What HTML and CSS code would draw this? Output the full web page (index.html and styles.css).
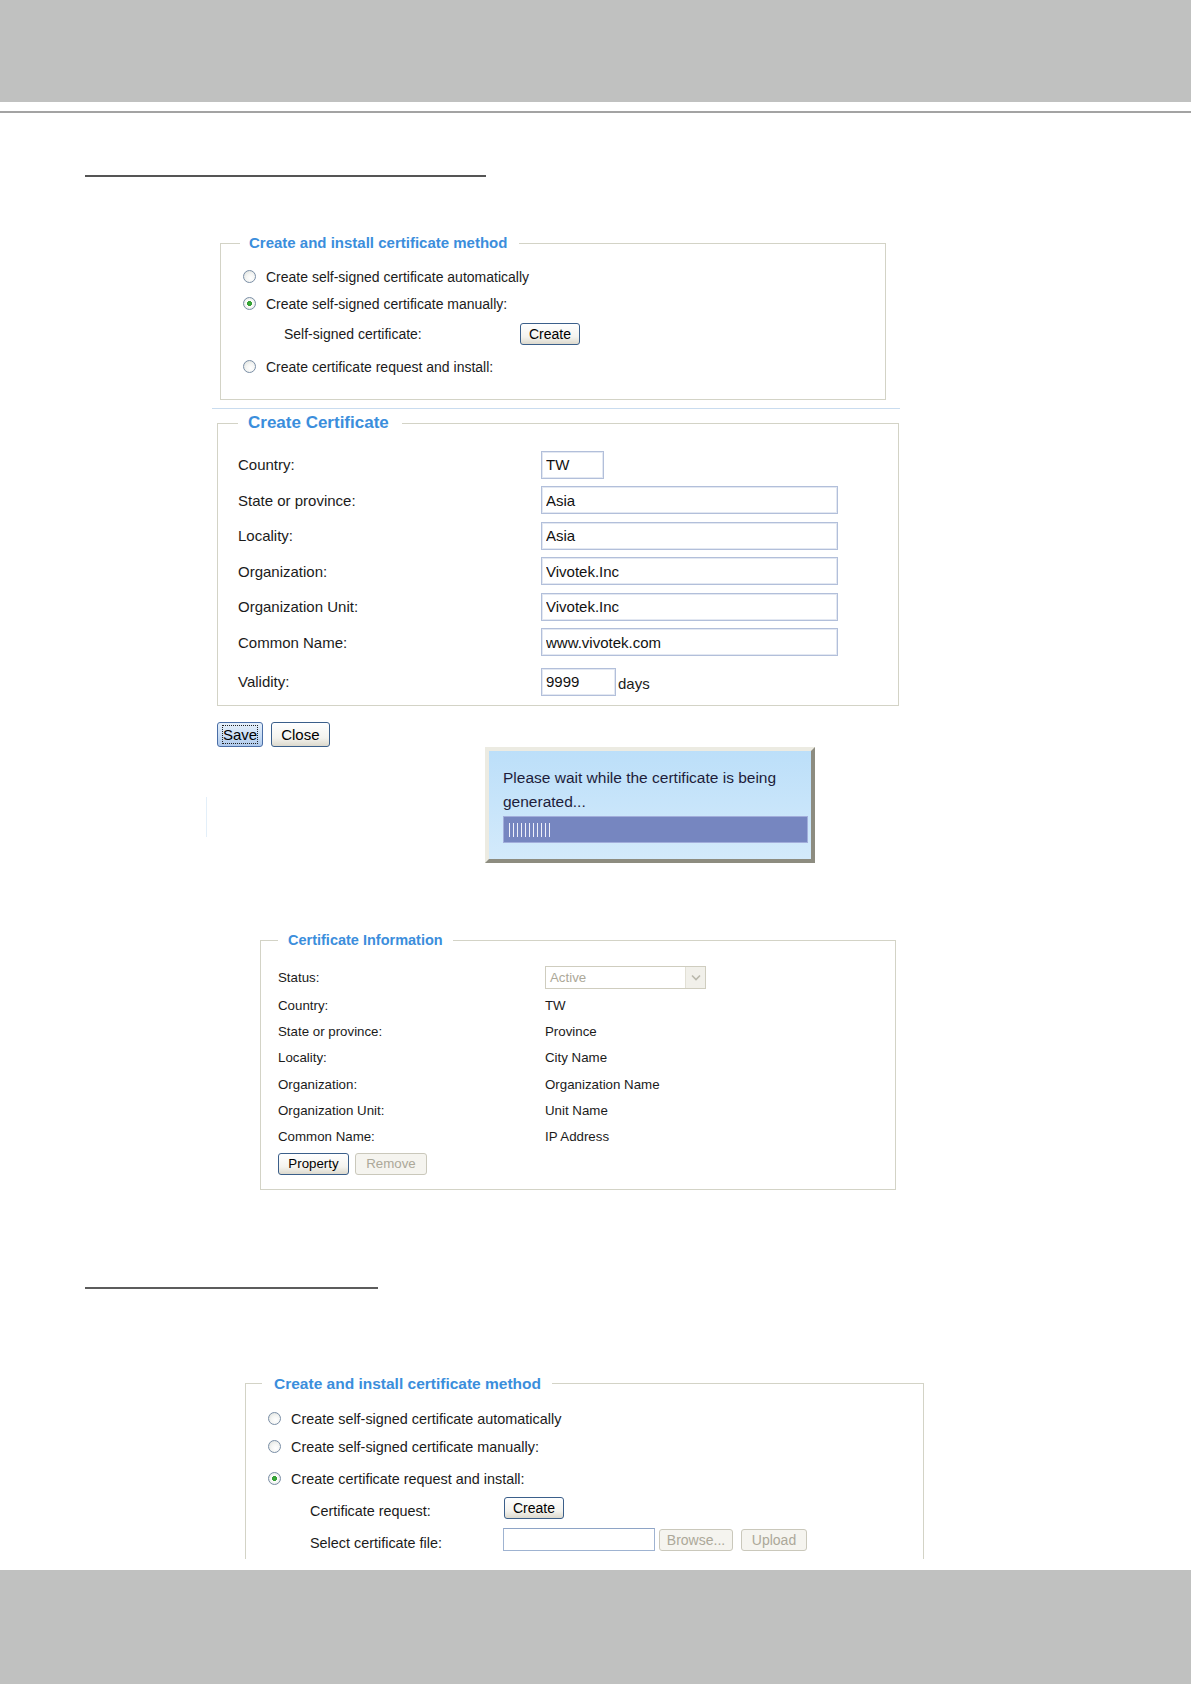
FILE: index.html
```html
<!DOCTYPE html>
<html lang="en">
  <head>
    <meta charset="UTF-8" />
    <meta name="viewport" content="width=device-width, initial-scale=1.0" />
    <title>HTTPS certificate</title>
    <link rel="stylesheet" href="styles.css">
  </head>
  <body>
    <div class="page-band"></div>
    <div class="page-rule"></div>

    <div class="section-line section-line-first"></div>

    <fieldset class="panel panel-method">
      <legend>Create and install certificate method</legend>
      <div class="panel-body">
        <label class="radio-row"><input type="radio" class="radio" name="method-a"> Create self-signed certificate automatically</label>
        <label class="radio-row"><input type="radio" class="radio" name="method-a" checked> Create self-signed certificate manually:</label>
        <div class="sub-row">
          <span class="sub-label">Self-signed certificate:</span>
          <button type="button" class="btn">Create</button>
        </div>
        <label class="radio-row radio-row-tall"><input type="radio" class="radio" name="method-a"> Create certificate request and install:</label>
      </div>
    </fieldset>

    <div class="split-line"></div>

    <fieldset class="panel panel-create">
      <legend>Create Certificate</legend>
      <div class="panel-body">
        <div class="form-row"><label class="form-label">Country:</label><input class="text-input input-short" value="TW"></div>
        <div class="form-row"><label class="form-label">State or province:</label><input class="text-input" value="Asia"></div>
        <div class="form-row"><label class="form-label">Locality:</label><input class="text-input" value="Asia"></div>
        <div class="form-row"><label class="form-label">Organization:</label><input class="text-input" value="Vivotek.Inc"></div>
        <div class="form-row"><label class="form-label">Organization Unit:</label><input class="text-input" value="Vivotek.Inc"></div>
        <div class="form-row"><label class="form-label">Common Name:</label><input class="text-input" value="www.vivotek.com"></div>
        <div class="form-row form-row-last"><label class="form-label">Validity:</label><input class="text-input input-days" value="9999"><span class="unit">days</span></div>
      </div>
    </fieldset>

    <div class="action-row">
      <button type="button" class="btn btn-big btn-focus"><span class="focus-ring">Save</span></button>
      <button type="button" class="btn btn-big btn-close">Close</button>
    </div>

    <div class="wait-row">
      <div class="ghost-line"></div>
      <div class="wait-box">
        <p class="wait-text">Please wait while the certificate is being<br>generated...</p>
        <div class="wait-bar"><div class="wait-fill"></div></div>
      </div>
    </div>

    <fieldset class="panel panel-info">
      <legend>Certificate Information</legend>
      <div class="panel-body">
        <div class="info-row info-row-status">
          <span class="info-label">Status:</span>
          <div class="select-box">
            <span class="select-text">Active</span>
            <span class="select-arrow">
              <svg width="10" height="7" viewBox="0 0 10 7"><path d="M1 1.5 L5 5.5 L9 1.5" fill="none" stroke="#b9b8ac" stroke-width="1.6"/></svg>
            </span>
          </div>
        </div>
        <div class="info-row"><span class="info-label">Country:</span><span>TW</span></div>
        <div class="info-row"><span class="info-label">State or province:</span><span>Province</span></div>
        <div class="info-row"><span class="info-label">Locality:</span><span>City Name</span></div>
        <div class="info-row"><span class="info-label">Organization:</span><span>Organization Name</span></div>
        <div class="info-row"><span class="info-label">Organization Unit:</span><span>Unit Name</span></div>
        <div class="info-row"><span class="info-label">Common Name:</span><span>IP Address</span></div>
        <div class="info-actions">
          <button type="button" class="btn btn-small">Property</button>
          <button type="button" class="btn btn-small" disabled>Remove</button>
        </div>
      </div>
    </fieldset>

    <div class="section-line section-line-second"></div>

    <fieldset class="panel panel-request">
      <legend>Create and install certificate method</legend>
      <div class="panel-body">
        <label class="radio-row"><input type="radio" class="radio" name="method-b"> Create self-signed certificate automatically</label>
        <label class="radio-row radio-row-mid"><input type="radio" class="radio" name="method-b"> Create self-signed certificate manually:</label>
        <label class="radio-row radio-row-tall"><input type="radio" class="radio" name="method-b" checked> Create certificate request and install:</label>
        <div class="sub-row sub-row-request">
          <span class="sub-label sub-label-low">Certificate request:</span>
          <button type="button" class="btn">Create</button>
        </div>
        <div class="sub-row sub-row-file">
          <span class="sub-label sub-label-low">Select certificate file:</span>
          <input class="file-input">
          <button type="button" class="btn btn-browse" disabled>Browse...</button>
          <button type="button" class="btn btn-upload" disabled>Upload</button>
        </div>
      </div>
    </fieldset>

    <div class="page-band page-band-bottom"></div>
  </body>
</html>
```

FILE: styles.css
```css
html,
body {
  margin: 0;
  overflow: hidden;
}

body {
  width: 1191px;
  height: 1684px;
  background: #FFFFFF;
  font-family: "Liberation Sans", Arial, sans-serif;
  color: #1b1b1b;
}

.page-band {
  height: 102px;
  background: #c0c1c0;
}

.page-band-bottom {
  margin-top: 11px;
  height: 114px;
}

.page-rule {
  margin-top: 9px;
  height: 2px;
  background: #a3a3a3;
}

.section-line {
  height: 2px;
  margin-left: 85px;
  background: #555555;
}

.section-line-first {
  margin-top: 62px;
  width: 401px;
}

.section-line-second {
  margin-top: 97px;
  width: 293px;
  background: #5c5c5c;
}

/* fieldset panels */
.panel {
  box-sizing: border-box;
  margin: 0;
  padding: 0;
  min-width: 0;
  border: 1px solid #d3d3c6;
}

.panel legend {
  padding: 0;
  color: #3b8edc;
  font-weight: bold;
}

.panel-method {
  margin-top: 57px;
  margin-left: 220px;
  width: 666px;
  font-size: 14px;
}

.panel-method legend {
  font-size: 15px;
  line-height: 18px;
  margin-left: 19px;
  padding: 0 12px 0 9px;
}

.panel-method .panel-body {
  padding: 11px 0 16px 22px;
}

.radio-row {
  display: flex;
  align-items: center;
  height: 27px;
}

.radio-row-mid {
  height: 30px;
}

.radio-row-tall {
  height: 33px;
}

.radio {
  appearance: none;
  -webkit-appearance: none;
  width: 13px;
  height: 13px;
  margin: 0 10px 0 0;
  border: 1px solid #7a8ea6;
  border-radius: 50%;
  background: radial-gradient(circle at 60% 65%, #ffffff 0, #f4f5f3 45%, #d9dcd8 100%);
  box-sizing: border-box;
}

.radio:checked {
  background: radial-gradient(circle, #3fb33f 0, #2f9a2f 2.2px, #ffffff 2.8px, #f4f5f3 55%, #d9dcd8 100%);
}

.sub-row {
  display: flex;
  align-items: center;
  height: 33px;
  padding-left: 41px;
}

.sub-label {
  width: 236px;
  flex-shrink: 0;
}

.btn {
  box-sizing: border-box;
  height: 22px;
  padding: 0 8px;
  border: 1px solid #3b5f8a;
  border-radius: 3px;
  background: linear-gradient(#ffffff, #f4f3ee 65%, #dcd9cd);
  font-family: inherit;
  font-size: 14px;
  line-height: 20px;
  color: #000000;
}

.btn:disabled {
  border-color: #cac8bb;
  background: #f5f4ef;
  color: #aca899;
}

.split-line {
  margin-top: 8px;
  margin-left: 212px;
  width: 688px;
  height: 1px;
  background: #c9dcef;
}

.panel-create {
  margin-top: 4px;
  margin-left: 217px;
  width: 682px;
  font-size: 15px;
}

.panel-create legend {
  font-size: 17px;
  line-height: 20px;
  margin-left: 20px;
  padding: 0 13px 0 10px;
}

.panel-create .panel-body {
  padding: 14px 0 5px 20px;
}

.form-row {
  display: flex;
  align-items: center;
  height: 35.5px;
}

.form-row-last {
  margin-top: 4px;
}

.form-label {
  width: 303px;
  flex-shrink: 0;
}

.text-input {
  box-sizing: border-box;
  width: 297px;
  height: 28px;
  padding: 0 4px;
  border: 1px solid #b2bfda;
  box-shadow: inset 0 0 0 1px #e3e8f2;
  font-family: inherit;
  font-size: 15px;
  color: #111111;
}

.input-short {
  width: 63px;
}

.input-days {
  width: 75px;
}

.unit {
  margin-left: 2px;
  padding-top: 4px;
}

.action-row {
  display: flex;
  gap: 8px;
  margin-top: 16px;
  margin-left: 217px;
}

.btn-big {
  height: 25px;
  padding: 0 5px;
  font-size: 15px;
  line-height: 23px;
}

.btn-close {
  padding: 0 9px;
}

.btn-focus {
  border-color: #4a6ea6;
  background: linear-gradient(#e6f0fb, #c7dcf4 60%, #afc9ec);
}

.focus-ring {
  display: inline-block;
  line-height: 17px;
  outline: 1px dotted #222222;
}

/* generating popup */
.wait-row {
  display: flex;
}

.ghost-line {
  width: 1px;
  height: 40px;
  margin: 50px 0 0 206px;
  background: #e3eff9;
}

.wait-box {
  box-sizing: border-box;
  width: 330px;
  height: 116px;
  margin-left: 278px;
  padding: 15px 3px 16px 14px;
  border: 4px solid;
  border-color: #ecebe2 #8d8c80 #8d8c80 #ecebe2;
  background: linear-gradient(#bcdff9, #d3eafb);
}

.wait-text {
  margin: 0;
  font-size: 15.5px;
  line-height: 24px;
  color: #1d1d3b;
}

.wait-bar {
  box-sizing: border-box;
  height: 27px;
  margin-top: 2px;
  padding: 6px 0 0 5px;
  border: 1px solid #a2aedb;
  background: #7686c0;
}

.wait-fill {
  width: 44px;
  height: 14px;
  background: repeating-linear-gradient(90deg, #eef0fa 0 1.2px, transparent 1.2px 4px);
}

/* certificate information */
.panel-info {
  margin-top: 69px;
  margin-left: 260px;
  width: 636px;
  font-size: 13.3px;
}

.panel-info legend {
  font-size: 14.5px;
  line-height: 17px;
  margin-left: 17px;
  padding: 0 10px;
}

.panel-info .panel-body {
  padding: 14px 0 14px 17px;
}

.info-row {
  display: flex;
  align-items: center;
  height: 26.2px;
}

.info-row-status {
  height: 30px;
}

.info-label {
  width: 267px;
  flex-shrink: 0;
}

.select-box {
  box-sizing: border-box;
  display: flex;
  width: 161px;
  height: 23px;
  border: 1px solid #cfcdbf;
  background: #FFFFFF;
}

.select-text {
  flex: 1;
  padding-left: 4px;
  line-height: 21px;
  color: #aca899;
}

.select-arrow {
  display: flex;
  align-items: center;
  justify-content: center;
  width: 19px;
  border-left: 1px solid #e2e0d5;
  background: #f1f0ea;
}

.info-actions {
  display: flex;
  gap: 6px;
  margin-top: 3px;
}

.btn-small {
  width: 71px;
  padding: 0;
  font-size: 13.3px;
}

.btn-small:disabled {
  width: 72px;
}

/* certificate request */
.panel-request {
  margin-top: 86px;
  margin-left: 245px;
  width: 679px;
  border-bottom: none;
  font-size: 14.4px;
}

.panel-request legend {
  font-size: 15.5px;
  line-height: 18px;
  margin-left: 16px;
  padding: 0 11px 0 12px;
}

.panel-request .panel-body {
  padding: 13px 0 0 22px;
}

.panel-request .radio-row {
  height: 26px;
}

.panel-request .radio-row-mid {
  height: 30px;
}

.panel-request .radio-row-tall {
  height: 34px;
}

.sub-row-request {
  height: 25px;
  padding-left: 42px;
}

.sub-row-file {
  height: 38px;
  padding-left: 42px;
}

.sub-row-request .sub-label,
.sub-row-file .sub-label {
  width: 194px;
}

.sub-label-low {
  padding-top: 6px;
}

.sub-row-request .btn {
  width: 60px;
  padding: 0;
}

.file-input {
  box-sizing: border-box;
  width: 152px;
  height: 23px;
  margin-left: -1px;
  border: 1px solid #9fb3d1;
  border-top-color: #8ea4c6;
}

.btn-browse {
  width: 74px;
  margin-left: 4px;
  padding: 0;
}

.btn-upload {
  width: 66px;
  margin-left: 8px;
  padding: 0;
}
```
